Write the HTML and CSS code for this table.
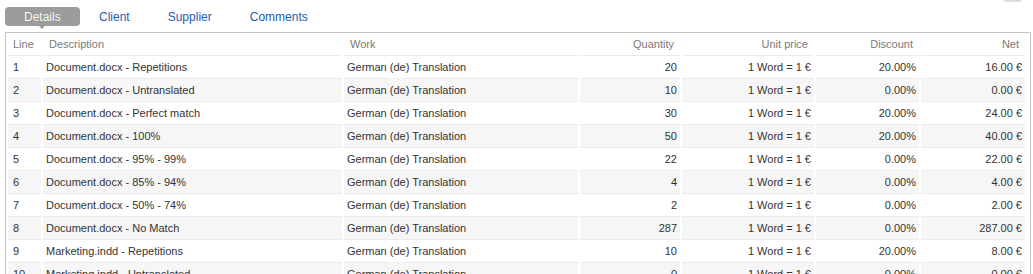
FILE: index.html
```html
<!DOCTYPE html>
<html>
<head>
<meta charset="utf-8">
<link rel="stylesheet" href="styles.css">
</head>
<body>
<div class="page">
  <div class="corner-knob"></div>
  <nav class="tabs">
    <span class="tab active">Details</span>
    <span class="tab">Client</span>
    <span class="tab">Supplier</span>
    <span class="tab">Comments</span>
  </nav>
  <div class="panel">
    <table class="grid">
      <colgroup>
        <col class="c-line"><col class="c-desc"><col class="c-work"><col class="c-qty"><col class="c-unit"><col class="c-disc"><col class="c-net">
      </colgroup>
      <thead>
        <tr><th class="line">Line</th><th>Description</th><th>Work</th><th class="num">Quantity</th><th class="num">Unit price</th><th class="num">Discount</th><th class="num">Net</th></tr>
      </thead>
      <tbody>
        <tr><td class="line">1</td><td>Document.docx - Repetitions</td><td>German (de) Translation</td><td class="num">20</td><td class="num">1 Word = 1 €</td><td class="num">20.00%</td><td class="num">16.00 €</td></tr>
        <tr><td class="line">2</td><td>Document.docx - Untranslated</td><td>German (de) Translation</td><td class="num">10</td><td class="num">1 Word = 1 €</td><td class="num">0.00%</td><td class="num">0.00 €</td></tr>
        <tr><td class="line">3</td><td>Document.docx - Perfect match</td><td>German (de) Translation</td><td class="num">30</td><td class="num">1 Word = 1 €</td><td class="num">20.00%</td><td class="num">24.00 €</td></tr>
        <tr><td class="line">4</td><td>Document.docx - 100%</td><td>German (de) Translation</td><td class="num">50</td><td class="num">1 Word = 1 €</td><td class="num">20.00%</td><td class="num">40.00 €</td></tr>
        <tr><td class="line">5</td><td>Document.docx - 95% - 99%</td><td>German (de) Translation</td><td class="num">22</td><td class="num">1 Word = 1 €</td><td class="num">0.00%</td><td class="num">22.00 €</td></tr>
        <tr><td class="line">6</td><td>Document.docx - 85% - 94%</td><td>German (de) Translation</td><td class="num">4</td><td class="num">1 Word = 1 €</td><td class="num">0.00%</td><td class="num">4.00 €</td></tr>
        <tr><td class="line">7</td><td>Document.docx - 50% - 74%</td><td>German (de) Translation</td><td class="num">2</td><td class="num">1 Word = 1 €</td><td class="num">0.00%</td><td class="num">2.00 €</td></tr>
        <tr><td class="line">8</td><td>Document.docx - No Match</td><td>German (de) Translation</td><td class="num">287</td><td class="num">1 Word = 1 €</td><td class="num">0.00%</td><td class="num">287.00 €</td></tr>
        <tr><td class="line">9</td><td>Marketing.indd - Repetitions</td><td>German (de) Translation</td><td class="num">10</td><td class="num">1 Word = 1 €</td><td class="num">20.00%</td><td class="num">8.00 €</td></tr>
        <tr><td class="line">10</td><td>Marketing.indd - Untranslated</td><td>German (de) Translation</td><td class="num">0</td><td class="num">1 Word = 1 €</td><td class="num">0.00%</td><td class="num">0.00 €</td></tr>
      </tbody>
    </table>
  </div>
</div>
</body>
</html>
```

FILE: styles.css
```css
html, body {
  margin: 0;
  padding: 0;
  background: #ffffff;
  overflow: hidden;
}

.page {
  position: relative;
  width: 1033px;
  height: 274px;
  overflow: hidden;
  font-family: "Liberation Sans", Arial, sans-serif;
}

.corner-knob {
  position: absolute;
  left: 1002px;
  top: -8px;
  width: 21px;
  height: 10px;
  border-radius: 5px;
  background: #dcdcdc;
}

.tabs {
  display: flex;
  gap: 0;
  padding: 7px 0 0 5px;
  height: 32px;
  box-sizing: border-box;
}

.tab {
  position: relative;
  display: block;
  height: 19px;
  line-height: 20px;
  padding: 0 19px;
  font-size: 12px;
  color: #1f5bb0;
}

.tab.active {
  width: 37px;
  background: #9c9c9c;
  color: #ffffff;
  border-radius: 4px;
  text-shadow: 0 0 1px #7a7a7a;
}

.tab.active::after {
  content: "";
  position: absolute;
  left: 34px;
  top: 19px;
  border-left: 3px solid transparent;
  border-right: 3px solid transparent;
  border-top: 3px solid #9c9c9c;
}

.panel {
  margin: 0 2px 0 5px;
  border: 1px solid #c4c4c4;
  border-bottom: none;
  padding-right: 3px;
}

.grid {
  table-layout: fixed;
  border-collapse: separate;
  border-spacing: 2px 0;
  width: 1021px;
  font-size: 11px;
  color: #333333;
}

.c-line { width: 33px; }
.c-desc { width: 299px; }
.c-work { width: 234px; }
.c-qty { width: 100px; }
.c-unit { width: 132px; }
.c-disc { width: 103px; }
.c-net { width: 104px; }

.grid th,
.grid td {
  padding: 0 3px 0 3px;
  height: 22px;
  line-height: 22px;
  border-bottom: 1px solid #ebebeb;
  white-space: nowrap;
  overflow: hidden;
  text-align: left;
  font-weight: normal;
}

.grid th {
  color: #7a7a7a;
  padding: 1px 6px 0 6px;
  height: 21px;
  line-height: 21px;
}

.grid th.line,
.grid td.line {
  padding-left: 5px;
}

.grid .num {
  text-align: right;
}

.grid tbody tr:nth-child(even) td {
  background: #f6f6f6;
}
```
